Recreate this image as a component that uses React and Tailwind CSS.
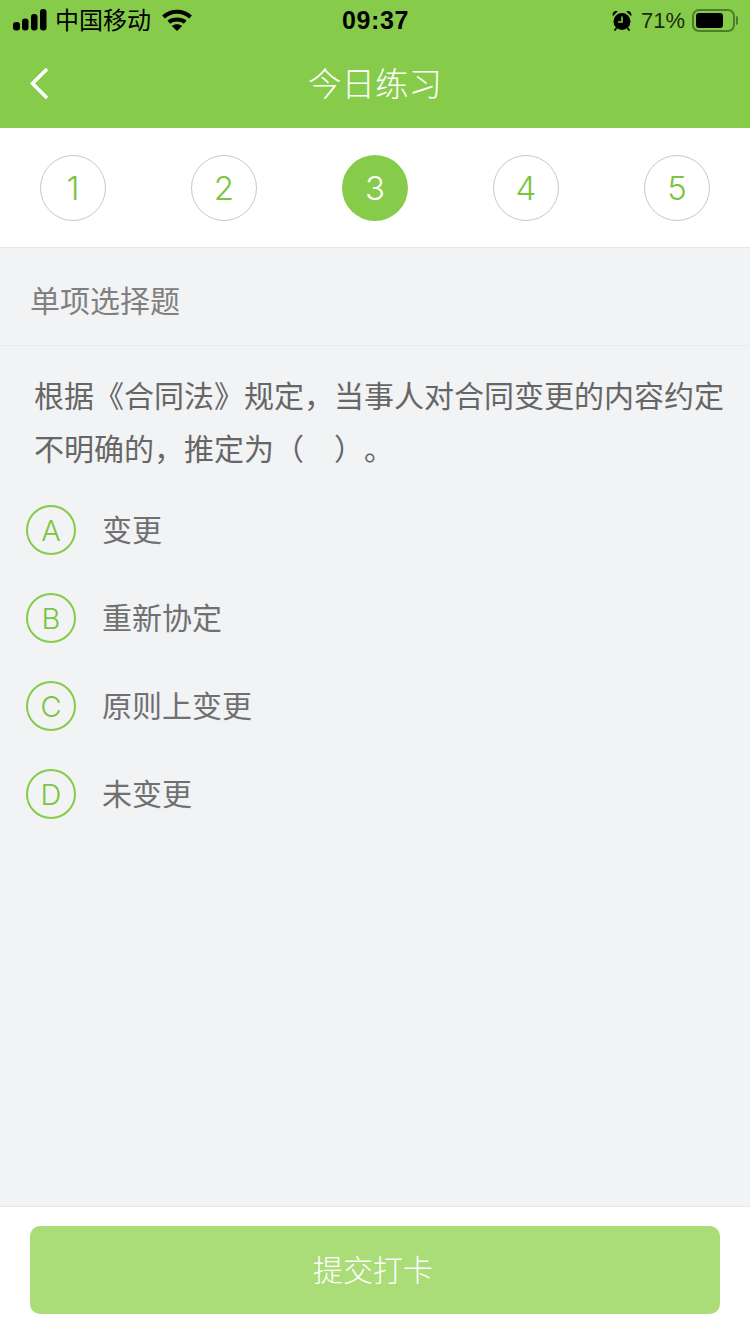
const cjk = "font-['Liberation_Sans','Noto_Sans_CJK_SC',sans-serif]";
const latinLight = "font-['Inter','Noto_Sans_CJK_SC',sans-serif] font-light";

const steps = [1, 2, 3, 4, 5];
const options = [
  { key: 'A', text: '变更' },
  { key: 'B', text: '重新协定' },
  { key: 'C', text: '原则上变更' },
  { key: 'D', text: '未变更' },
];

const StatusBar = () => (
  <div className="flex h-10 items-center justify-between pl-[13px] pr-[12px] text-black">
    <div className="flex w-[250px] items-center">
      {/* Signal */}
      <svg width="34" height="22" viewBox="0 0 34 22" fill="currentColor">
        <rect x="0" y="13" width="7" height="8.5" rx="3" />
        <rect x="9" y="9.5" width="6.5" height="12" rx="3" />
        <rect x="18" y="5" width="6.5" height="16.5" rx="3" />
        <rect x="27" y="0" width="6.5" height="21.5" rx="3" />
      </svg>
      <span className="ml-2 pt-[2px] text-[24px] leading-none">中国移动</span>
      {/* Wifi */}
      <svg className="ml-[11px]" width="30" height="22" viewBox="0 0 30 22" fill="none" stroke="currentColor" strokeWidth="4.2">
        <path d="M1.5 8C9 1 21 1 28.5 8" />
        <path d="M6.8 13.2C11 9.6 19 9.6 23.2 13.2" />
        <path d="M15 22L9.8 17C13 14.8 17 14.8 20.2 17Z" fill="currentColor" stroke="none" />
      </svg>
    </div>
    <span className="pt-[1px] text-[25px] font-semibold leading-none tracking-[0.6px]">09:37</span>
    <div className="flex w-[250px] items-center justify-end">
      {/* Alarm */}
      <svg width="20" height="21" viewBox="0 0 20 21">
        <circle cx="10" cy="11.5" r="8.5" fill="currentColor" />
        <path d="M10 6.5V12H6" fill="none" stroke="#86cc4a" strokeWidth="1.6" />
        <path d="M0.8 6.2C-0.2 2.5 2.5 0 5.8 1.2ZM19.2 6.2C20.2 2.5 17.5 0 14.2 1.2Z" fill="currentColor" />
        <path d="M4.5 18L2.5 20.5M15.5 18L17.5 20.5" stroke="currentColor" strokeWidth="1.8" />
      </svg>
      <span className="ml-[9px] pt-[1px] text-[22px] leading-none text-[#1a2a10]">71%</span>
      {/* Battery */}
      <div className="ml-[7px] flex items-center">
        <div className="flex h-[23px] w-[43px] items-center rounded-[7px] border-2 border-[#4d7f2b] p-[2px]">
          <div className="h-full w-[27px] rounded-[3px] bg-black" />
        </div>
        <div className="ml-[1px] h-[9px] w-[2px] rounded-r-sm bg-[#4d7f2b]" />
      </div>
    </div>
  </div>
);

const App = () => {
  return (
    <div className={`flex min-h-[1334px] flex-col bg-[#f2f3f5] ${cjk}`}>
      {/* Header */}
      <div className="bg-[#86cc4a]">
        <StatusBar />
        <div className="relative flex h-[88px] items-center justify-center pt-[3px]">
          <svg className="absolute left-[29px] top-[27px]" width="20" height="33" viewBox="0 0 20 33" fill="none" stroke="#fff" strokeWidth="3.6">
            <path d="M18 2L3.5 16.5L18 31" />
          </svg>
          <h1 className="text-[33.5px] font-light text-white">今日练习</h1>
        </div>
      </div>

      {/* Steps */}
      <div className="flex h-[120px] justify-between border-b border-[#e6e7e9] bg-white px-10 pt-[27px]">
        {steps.map((step) => (
          <div
            key={step}
            className={
              step === 3
                ? `flex h-[66px] w-[66px] items-center justify-center rounded-full bg-[#86cc4a] pt-[2px] text-[33px] text-white ${latinLight}`
                : `flex h-[66px] w-[66px] items-center justify-center rounded-full border border-[#c8c8c8] pt-[2px] text-[33px] text-[#7cc440] ${latinLight}`
            }
          >
            {step}
          </div>
        ))}
      </div>

      {/* Section title */}
      <div className="flex h-[98px] items-center border-b border-[#e9eaec] pl-[30px] pt-[9px] text-[30px] text-[#808080]">
        单项选择题
      </div>

      {/* Question */}
      <p className="pl-[34px] pr-[20px] pt-[24px] text-[30px] leading-[53px] text-[#666] [text-spacing-trim:space-all]">
        根据《合同法》规定，当事人对合同变更的内容约定不明确的，推定为（　）。
      </p>

      {/* Options */}
      <div className="flex flex-1 flex-col gap-[38px] pl-[26px] pt-[29px]">
        {options.map((option) => (
          <div key={option.key} className="flex items-center gap-[26px]">
            <div className={`flex h-[50px] w-[50px] items-center justify-center rounded-full border-2 border-[#86cc4a] pt-[2px] text-[29px] text-[#7cc440] ${latinLight}`}>
              {option.key}
            </div>
            <span className="text-[30px] text-[#707070]">{option.text}</span>
          </div>
        ))}
      </div>

      {/* Submit */}
      <div className="h-[128px] border-t border-[#e6e7e9] bg-white px-[30px] pt-[19px]">
        <button className="flex h-[88px] w-full items-center justify-center rounded-[10px] bg-[#aadc78] pr-1 text-[30px] font-light text-white">
          提交打卡
        </button>
      </div>
    </div>
  );
};

export default App;
